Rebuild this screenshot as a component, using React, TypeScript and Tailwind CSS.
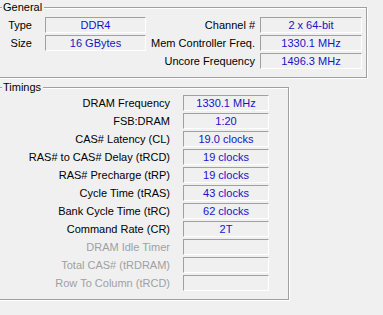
const general = [
  { label: "Type", value: "DDR4", rlabel: "Channel #", rvalue: "2 x 64-bit" },
  { label: "Size", value: "16 GBytes", rlabel: "Mem Controller Freq.", rvalue: "1330.1 MHz" },
  { label: "", value: null, rlabel: "Uncore Frequency", rvalue: "1496.3 MHz" },
];

const timings = [
  { label: "DRAM Frequency", value: "1330.1 MHz" },
  { label: "FSB:DRAM", value: "1:20" },
  { label: "CAS# Latency (CL)", value: "19.0 clocks" },
  { label: "RAS# to CAS# Delay (tRCD)", value: "19 clocks" },
  { label: "RAS# Precharge (tRP)", value: "19 clocks" },
  { label: "Cycle Time (tRAS)", value: "43 clocks" },
  { label: "Bank Cycle Time (tRC)", value: "62 clocks" },
  { label: "Command Rate (CR)", value: "2T" },
  { label: "DRAM Idle Timer", value: "", disabled: true },
  { label: "Total CAS# (tRDRAM)", value: "", disabled: true },
  { label: "Row To Column (tRCD)", value: "", disabled: true },
];

function Field({ value }: { value: string }) {
  return (
    <div className="h-[16px] border-t border-l border-[#a0a0a0] border-r-white border-b-white border-r border-b text-center text-[#1414c8] leading-[14px]">
      {value}
    </div>
  );
}

function Group({ title, className, children }: { title: string; className: string; children: React.ReactNode }) {
  return (
    <div className={"relative ml-[-3px] border border-[#a0a0a0] shadow-[1px_1px_0_#fff,inset_1px_1px_0_#fff] " + className}>
      <div className="absolute top-[-8px] left-[4px] h-[16px] leading-[15px] bg-[#f0f0f0] pl-[1px] pr-[2px] text-black">
        {title}
      </div>
      {children}
    </div>
  );
}

export default function App() {
  return (
    <div
      className="w-[383px] h-[315px] overflow-hidden bg-[#f0f0f0] pt-[7px] text-[11px] text-black"
      style={{ fontFamily: '"Liberation Sans", Arial, sans-serif' }}
    >
      <Group title="General" className="w-[370px] h-[71px] pt-[9px] pl-[3px] pr-[4px]">
        <div className="grid grid-cols-[44px_101px_1fr_102px] gap-y-[2px]">
          {general.map((row, i) => (
            <div key={i} className="contents">
              <div className="pr-[13px] text-right leading-[16px]">{row.label}</div>
              {row.value !== null ? <Field value={row.value} /> : <div />}
              <div className="pr-[5px] text-right leading-[16px] whitespace-nowrap">{row.rlabel}</div>
              <Field value={row.rvalue} />
            </div>
          ))}
        </div>
      </Group>

      <Group title="Timings" className="mt-[9px] w-[292px] h-[213px] pt-[7px] pl-[3px]">
        <div className="grid grid-cols-[182px_86px] gap-y-[2px]">
          {timings.map((row, i) => (
            <div key={i} className="contents">
              <div
                className={
                  "pr-[13px] text-right leading-[16px] whitespace-nowrap " +
                  (row.disabled ? "text-[#a0a0a0]" : "text-black")
                }
              >
                {row.label}
              </div>
              <Field value={row.value} />
            </div>
          ))}
        </div>
      </Group>
    </div>
  );
}
